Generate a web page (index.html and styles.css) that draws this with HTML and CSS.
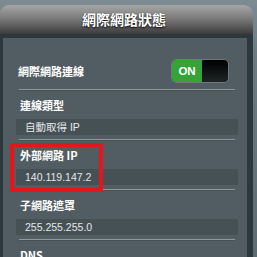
FILE: index.html
```html
<!DOCTYPE html>
<html lang="zh-Hant">
<head>
    <meta charset="UTF-8">
    <meta name="viewport" content="width=device-width, initial-scale=1.0">
    <title>網際網路狀態</title>
    <link rel="stylesheet" href="styles.css">
</head>
<body>
<div class="card">
    <div class="header">網際網路狀態</div>
    <div class="panel">
        <div class="row">
            <div class="label">網際網路連線</div>
            <div class="toggle">
                <div class="toggle_on">ON</div>
                <div class="toggle_knob"></div>
            </div>
        </div>
        <div class="sep"></div>

        <div class="section">
            <div class="label">連線類型</div>
            <div class="value">自動取得 IP</div>
            <div class="sep"></div>
        </div>

        <div class="section">
            <div class="label">外部網路 IP</div>
            <div class="value">140.119.147.2</div>
            <div class="sep"></div>
            <div class="highlight"></div>
        </div>

        <div class="section">
            <div class="label">子網路遮罩</div>
            <div class="value">255.255.255.0</div>
            <div class="sep"></div>
        </div>

        <div class="section">
            <div class="label">DNS</div>
        </div>
    </div>
</div>
</body>
</html>
```

FILE: styles.css
```css
html, body {
    margin: 0;
    height: 100%;
    overflow: hidden;
}
body {
    background: linear-gradient(#7d8b93, #6c7a81 20%, #5d6b72);
    font-family: "Liberation Sans", "Noto Sans CJK TC", sans-serif;
    padding-top: 5px;
    box-sizing: border-box;
}
.card {
    width: 253px;
}
.header {
    height: 29px;
    line-height: 29px;
    border-radius: 9px 9px 0 0;
    background: linear-gradient(#a6a6a6, #7c7c7c 45%, #3c3c3c);
    color: #ffffff;
    text-align: center;
    font-family: "Noto Sans CJK TC", sans-serif;
    font-size: 14px;
    font-weight: bold;
    text-shadow: 0 1px 2px #000;
    padding-right: 5px;
}
.panel {
    background: #515d62;
    border-top: 4px solid #2d383c;
    border-left: 3px solid #2d383c;
    border-right: 6px solid #2d383c;
    height: 240px;
}
.row {
    display: flex;
    align-items: center;
    justify-content: space-between;
    height: 37px;
    padding: 14px 18px 0 15px;
}
.label {
    color: #ffffff;
    font-family: "Noto Sans CJK TC", sans-serif;
    font-weight: bold;
    font-size: 11px;
}
.section {
    position: relative;
    padding: 0 9px 0 13px;
}
.section .label {
    height: 28px;
    line-height: 28px;
    padding-left: 4px;
}
.value {
    height: 16px;
    line-height: 16px;
    background: #465156;
    color: #e4e6e7;
    font-size: 10.5px;
    padding-left: 9px;
    margin-bottom: 4px;
}
.sep {
    height: 0;
    border-top: 1px solid #8d999d;
    border-bottom: 1px solid #465055;
    margin: 0 12px 0 16px;
}
.section .sep {
    margin: 0 3px;
}
.toggle {
    display: flex;
    width: 56px;
    height: 22px;
    border: 1px solid #6f797d;
    border-radius: 5px;
    overflow: hidden;
    background: #1c1f20;
}
.toggle_on {
    width: 30px;
    background: #36a336;
    color: #ffffff;
    font-size: 11.5px;
    font-weight: bold;
    line-height: 22px;
    text-align: center;
}
.toggle_knob {
    flex: 1;
    border-radius: 4px;
    background: linear-gradient(#000000, #1e2526);
}
.highlight {
    position: absolute;
    top: 2px;
    left: 7px;
    width: 85px;
    height: 41px;
    border: 4px solid #e5151d;
}
```
